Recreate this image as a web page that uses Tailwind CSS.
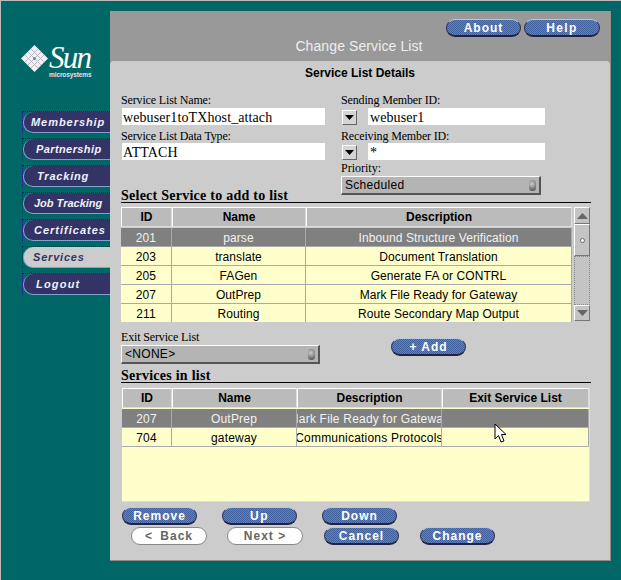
<!DOCTYPE html>
<html lang="en">
<head>
  <meta charset="UTF-8" />
  <meta name="viewport" content="width=device-width, initial-scale=1.0" />
  <title>Change Service List</title>
  <script src="https://cdn.jsdelivr.net/npm/@tailwindcss/browser@4"></script>
</head>
<body class="w-[621px] h-[580px] overflow-hidden bg-[#006666] border-t border-l border-[#bbbbbb] font-['Liberation_Sans',sans-serif] relative">
  <div class="flex pt-[10px]">

    <!-- left nav -->
    <aside class="w-[109px] shrink-0">
      <div class="flex items-start h-[66px] mt-[34px] pl-[20px]">
        <svg width="27" height="27" viewBox="0 0 27 27" class="shrink-0">
          <path d="M13.5 0 27 13.5 13.5 27 0 13.5Z" fill="#f4f0f4" />
          <path d="M7 7 20 20M10 4 23 17M4 10 17 23M20 7 7 20M17 4 4 17M23 10 10 23" stroke="#b9b4c4" stroke-width="1" fill="none" />
          <circle cx="13.5" cy="13.5" r="1.5" fill="#2aa8a8" />
        </svg>
        <div class="ml-[1px] flex flex-col text-white">
          <span class="font-['Liberation_Serif',serif] italic text-[31px] leading-[26px] tracking-[-1.8px]">Sun</span>
          <span class="text-[6.5px] leading-[8px] font-bold text-[#e6e0ea] tracking-[-0.1px]">microsystems</span>
        </div>
      </div>
      <nav class="flex flex-col gap-[5px] pl-[21px] text-[11px] font-bold italic text-[#eef2fa]">
        <div class="h-[22px] border-l border-t border-dotted border-[#1c1c88]"><div class="h-full flex items-center pl-[7px] rounded-l-[10px] bg-[#333366] border-l border-b border-[#7fa3cf] tracking-[0.95px]">Membership</div></div>
        <div class="h-[22px] border-l border-t border-dotted border-[#1c1c88]"><div class="h-full flex items-center pl-[12px] rounded-l-[10px] bg-[#333366] border-l border-b border-[#7fa3cf] tracking-[0.4px]">Partnership</div></div>
        <div class="h-[22px] border-l border-t border-dotted border-[#1c1c88]"><div class="h-full flex items-center pl-[13px] rounded-l-[10px] bg-[#333366] border-l border-b border-[#7fa3cf] tracking-[0.8px]">Tracking</div></div>
        <div class="h-[22px] border-l border-t border-dotted border-[#1c1c88]"><div class="h-full flex items-center pl-[10px] rounded-l-[10px] bg-[#333366] border-l border-b border-[#7fa3cf] tracking-[0px]">Job Tracking</div></div>
        <div class="h-[22px] border-l border-t border-dotted border-[#1c1c88]"><div class="h-full flex items-center pl-[10px] rounded-l-[10px] bg-[#333366] border-l border-b border-[#7fa3cf] tracking-[1px]">Certificates</div></div>
        <div class="h-[22px] border-l border-t border-dotted border-[#1c1c88]"><div class="h-full flex items-center pl-[9px] rounded-l-[10px] bg-[#cccccc] border-l border-b border-[#7fa3cf] text-[#333366] tracking-[0.8px]">Services</div></div>
        <div class="h-[22px] border-l border-t border-dotted border-[#1c1c88]"><div class="h-full flex items-center pl-[12px] rounded-l-[10px] bg-[#333366] border-l border-b border-[#7fa3cf] tracking-[1.2px]">Logout</div></div>
      </nav>
    </aside>

    <!-- main panel -->
    <main class="w-[501px] h-[550px] shrink-0 bg-[#999999] flex flex-col border-r border-b border-[#8c8c8c]">
      <header class="h-[50px] shrink-0 flex flex-col">
        <div class="flex justify-end gap-[3px] pt-[8px] pr-[10px]">
          <button class="h-[18px] w-[75px] rounded-full flex items-center justify-center text-[12px] font-bold tracking-[1px] text-white border border-[#30305a] border-t-[#b8c8e0] border-b-[2px] border-b-[#222244] bg-[repeating-conic-gradient(#3f5f9c_0_25%,#6d80b0_0_50%)] bg-[length:2px_2px]">About</button>
          <button class="h-[18px] w-[76px] rounded-full flex items-center justify-center text-[12px] font-bold tracking-[1.4px] text-white border border-[#30305a] border-t-[#b8c8e0] border-b-[2px] border-b-[#222244] bg-[repeating-conic-gradient(#3f5f9c_0_25%,#6d80b0_0_50%)] bg-[length:2px_2px]">Help</button>
        </div>
        <h1 class="text-center text-[14px] leading-[16px] tracking-[0.1px] text-[#eeeeee] mt-[1px] pr-[2px]">Change Service List</h1>
      </header>

      <section class="flex-1 bg-[#cccccc] rounded-t-[4px] pl-[11px]">
        <h2 class="h-[24px] pr-[11px] flex items-center justify-center text-[12px] font-bold text-black">Service List Details</h2>

        <div class="mt-[9px] w-[470px] h-[109px] flex border-b border-black font-['Liberation_Serif',serif] text-black">
          <div class="w-[220px] shrink-0">
            <label class="block h-[14px] text-[12px] leading-[13px] tracking-[-0.15px]">Service List Name:</label>
            <div class="ml-[1px] w-[203px] h-[17px] bg-white pl-[1px] text-[14px] leading-[19px] tracking-[0.1px]">webuser1toTXhost_attach</div>
            <label class="block h-[14px] mt-[4px] text-[12px] leading-[14px] tracking-[-0.15px]">Service List Data Type:</label>
            <div class="ml-[1px] w-[203px] h-[17px] bg-white pl-[1px] text-[14px] leading-[19px] tracking-[0.1px]">ATTACH</div>
            <h3 class="mt-[27px] text-[14px] leading-[17px] h-[15px] font-bold tracking-[0.25px]">Select Service to add to list</h3>
          </div>
          <div class="flex-1">
            <label class="block h-[14px] text-[12px] leading-[13px] tracking-[-0.15px]">Sending Member ID:</label>
            <div class="flex h-[17px]">
              <button class="w-[15px] h-[15px] mt-[2px] ml-[1px] bg-[#d4d4d4] border border-white border-r-[#666666] border-b-[#666666] flex items-center justify-center">
                <svg width="9" height="5" viewBox="0 0 9 5"><path d="M0 0H9L4.5 5Z" fill="#000" /></svg>
              </button>
              <div class="ml-[11px] w-[177px] bg-white pl-[2px] text-[14px] leading-[19px] tracking-[0.1px]">webuser1</div>
            </div>
            <label class="block h-[14px] mt-[4px] text-[12px] leading-[14px] tracking-[-0.15px]">Receiving Member ID:</label>
            <div class="flex h-[17px]">
              <button class="w-[15px] h-[15px] mt-[2px] ml-[1px] bg-[#d4d4d4] border border-white border-r-[#666666] border-b-[#666666] flex items-center justify-center">
                <svg width="9" height="5" viewBox="0 0 9 5"><path d="M0 0H9L4.5 5Z" fill="#000" /></svg>
              </button>
              <div class="ml-[11px] w-[177px] bg-white pl-[2px] text-[14px] leading-[19px]">*</div>
            </div>
            <label class="block h-[15px] mt-[1px] text-[12px] leading-[15px]">Priority:</label>
            <div class="w-[200px] h-[19px] flex items-center justify-between px-[3px] bg-[#b4b4b4] border border-t-white border-l-white border-r-[2px] border-b-[2px] border-r-[#555555] border-b-[#555555] font-['Liberation_Sans',sans-serif] text-[12px] tracking-[0.3px]">
              Scheduled
              <span class="w-[7px] h-[11px] rounded-full bg-[radial-gradient(circle_at_40%_35%,#cccccc,#444444)]"></span>
            </div>
          </div>
        </div>

        <!-- available services -->
        <div class="mt-[4px] w-[470px] h-[115px] flex justify-between">
          <div id="serviceTable" class="w-[451px] h-[115px] overflow-hidden text-[12px] tracking-[0.08px] bg-[#cccccc]"></div>
          <div class="w-[16px] mr-[1px] h-[114px] flex flex-col">
            <div class="h-[17px] flex items-center justify-center bg-[#c4c4c4] border border-white border-r-[#777777] border-b-[#777777]">
              <svg width="11" height="6" viewBox="0 0 11 6"><path d="M5.5 0 11 6H0Z" fill="#666666" /></svg>
            </div>
            <div class="h-[32px] flex items-center justify-center bg-[#c4c4c4] border border-white border-r-[#777777] border-b-[#777777]">
              <span class="w-[5px] h-[5px] rounded-full border border-[#666666] bg-white"></span>
            </div>
            <div class="flex-1 border border-dotted border-[#888888] bg-[#c4c4c4]"></div>
            <div class="h-[16px] flex items-center justify-center bg-[#c4c4c4] border border-white border-r-[#777777] border-b-[#777777]">
              <svg width="11" height="6" viewBox="0 0 11 6"><path d="M0 0H11L5.5 6Z" fill="#666666" /></svg>
            </div>
          </div>
        </div>

        <div class="mt-[9px] flex">
          <div class="w-[270px]">
            <label class="block h-[14px] font-['Liberation_Serif',serif] text-[12px] leading-[13px] tracking-[-0.15px] text-black">Exit Service List</label>
            <div class="w-[199px] h-[19px] flex items-center justify-between px-[3px] bg-[#b4b4b4] border border-t-white border-l-white border-r-[2px] border-b-[2px] border-r-[#555555] border-b-[#555555] text-[12px] tracking-[0.3px] text-black">
              &lt;NONE&gt;
              <span class="w-[7px] h-[11px] rounded-full bg-[radial-gradient(circle_at_40%_35%,#cccccc,#444444)]"></span>
            </div>
          </div>
          <button class="mt-[7px] h-[18px] w-[75px] rounded-full flex items-center justify-center text-[12px] font-bold tracking-[1px] text-white border border-[#30305a] border-t-[#b8c8e0] border-b-[2px] border-b-[#222244] bg-[repeating-conic-gradient(#3f5f9c_0_25%,#6d80b0_0_50%)] bg-[length:2px_2px]">+ Add</button>
        </div>

        <h3 class="mt-[4px] w-[470px] h-[15px] font-['Liberation_Serif',serif] text-[14px] leading-[16px] font-bold tracking-[0.25px] text-black border-b border-black">Services in list</h3>

        <!-- services in list -->
        <div id="listTable" class="mt-[5px] ml-[1px] w-[468px] h-[114px] bg-[#ffffcc] text-[12px] tracking-[0.2px] border-r border-b border-[#dddddd]"></div>

        <div class="mt-[5px] ml-[1px] flex gap-[25px]">
          <button class="h-[18px] w-[75px] rounded-full flex items-center justify-center text-[12px] font-bold tracking-[1px] text-white border border-[#30305a] border-t-[#b8c8e0] border-b-[2px] border-b-[#222244] bg-[repeating-conic-gradient(#3f5f9c_0_25%,#6d80b0_0_50%)] bg-[length:2px_2px]">Remove</button>
          <button class="h-[18px] w-[75px] rounded-full flex items-center justify-center text-[12px] font-bold tracking-[1.4px] text-white border border-[#30305a] border-t-[#b8c8e0] border-b-[2px] border-b-[#222244] bg-[repeating-conic-gradient(#3f5f9c_0_25%,#6d80b0_0_50%)] bg-[length:2px_2px]">Up</button>
          <button class="h-[18px] w-[75px] rounded-full flex items-center justify-center text-[12px] font-bold tracking-[1px] text-white border border-[#30305a] border-t-[#b8c8e0] border-b-[2px] border-b-[#222244] bg-[repeating-conic-gradient(#3f5f9c_0_25%,#6d80b0_0_50%)] bg-[length:2px_2px]">Down</button>
        </div>
        <div class="mt-[2px] ml-[10px] flex">
          <button class="h-[18px] w-[76px] rounded-full flex items-center justify-center text-[12px] font-bold tracking-[1px] [word-spacing:3px] text-[#666666] bg-white border border-[#888888]">&lt; Back</button>
          <button class="ml-[20px] h-[18px] w-[76px] rounded-full flex items-center justify-center text-[12px] font-bold tracking-[1px] text-[#666666] bg-white border border-[#888888]">Next &gt;</button>
          <button class="ml-[21px] h-[18px] w-[75px] rounded-full flex items-center justify-center text-[12px] font-bold tracking-[1px] text-white border border-[#30305a] border-t-[#b8c8e0] border-b-[2px] border-b-[#222244] bg-[repeating-conic-gradient(#3f5f9c_0_25%,#6d80b0_0_50%)] bg-[length:2px_2px]">Cancel</button>
          <button class="ml-[21px] h-[18px] w-[75px] rounded-full flex items-center justify-center text-[12px] font-bold tracking-[1px] text-white border border-[#30305a] border-t-[#b8c8e0] border-b-[2px] border-b-[#222244] bg-[repeating-conic-gradient(#3f5f9c_0_25%,#6d80b0_0_50%)] bg-[length:2px_2px]">Change</button>
        </div>
      </section>
    </main>
  </div>

  <!-- mouse pointer in the screenshot -->
  <svg class="absolute left-[493px] top-[422px]" width="14" height="21" viewBox="0 0 14 21">
    <path d="M1 1V16L4.5 12.5 7 19 10 18 7.5 11.5H12Z" fill="#fff" stroke="#000" stroke-width="1" />
  </svg>

  <script>
    const headCell = "h-[20px] flex items-center justify-center font-bold tracking-normal text-black bg-[#bbbbbb] border border-white border-r-[#dddddd] border-b-[#dddddd]";
    const bodyCell = "h-[19px] pt-[2px] flex items-center justify-center overflow-hidden whitespace-nowrap border-r border-b border-[#aaaaaa]";
    const selected = "bg-[#808080] text-[#f2f2f2]";
    const normal = "bg-[#ffffcc] text-black";

    function buildTable(id, cols, headers, rows) {
      let html = `<div class="flex mb-[1px]">` + headers.map((h, i) =>
        `<div class="${headCell}" style="width:${cols[i]}px">${h}</div>`).join("") + `</div>`;
      rows.forEach((row, r) => {
        html += `<div class="flex ${r === 0 ? selected : normal}">` + row.map((c, i) =>
          `<div class="${bodyCell}" style="width:${cols[i]}px">${c}</div>`).join("") + `</div>`;
      });
      document.getElementById(id).innerHTML = html;
    }

    buildTable("serviceTable", [51, 134, 266], ["ID", "Name", "Description"], [
      ["201", "parse", "Inbound Structure Verification"],
      ["203", "translate", "Document Translation"],
      ["205", "FAGen", "Generate FA or CONTRL"],
      ["207", "OutPrep", "Mark File Ready for Gateway"],
      ["211", "Routing", "Route Secondary Map Output"]
    ]);

    buildTable("listTable", [50, 125, 145, 147], ["ID", "Name", "Description", "Exit Service List"], [
      ["207", "OutPrep", "Mark File Ready for Gateway", ""],
      ["704", "gateway", "Communications Protocols", ""]
    ]);
  </script>
</body>
</html>
